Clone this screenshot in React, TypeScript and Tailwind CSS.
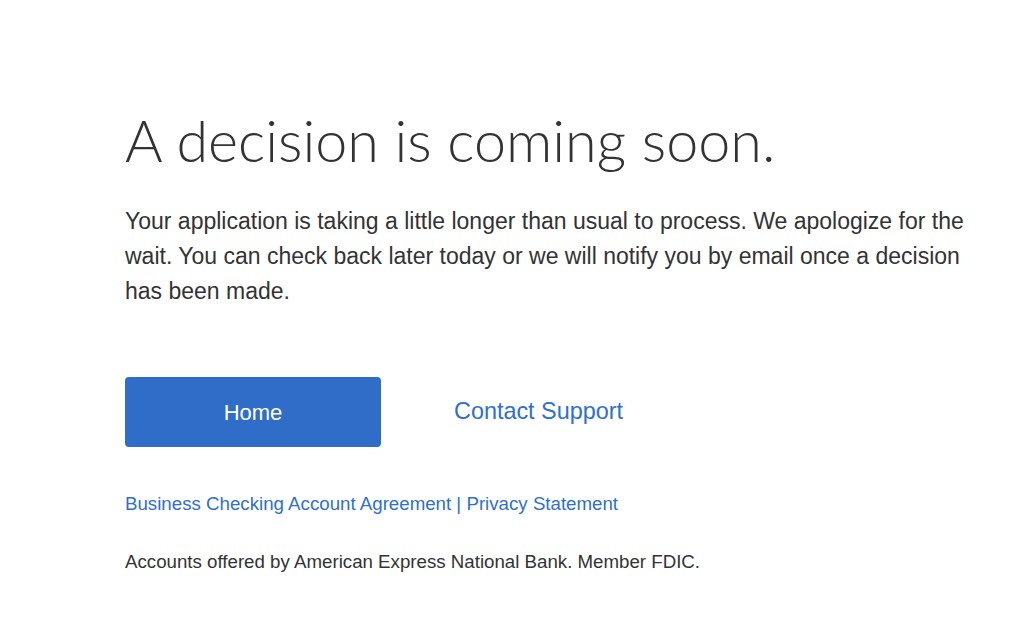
export default function App() {
  return (
    <div className="min-h-screen w-full bg-white" style={{ fontFamily: '"Liberation Sans", Arial, sans-serif' }}>
      <div className="pl-[125px] pt-[104px] pr-[20px]">
        <h1 className="text-[57.5px] leading-[72px] font-light text-[#333333]" style={{ fontFamily: 'Lato, "Liberation Sans", sans-serif' }}>
          A decision is coming soon.
        </h1>
        <p className="mt-[28px] max-w-[860px] text-[23px] leading-[35px] text-[#333333]">
          Your application is taking a little longer than usual to process. We apologize for the wait. You can check back later today or we will notify you by email once a decision has been made.
        </p>
        <div className="mt-[68px] flex items-center">
          <button className="flex h-[70px] w-[256px] items-center justify-center rounded-[4px] bg-[#2f6dc8] text-[22px] text-white">
            Home
          </button>
          <a className="ml-[73px] text-[23.4px] text-[#2f6fcd]">Contact Support</a>
        </div>
        <div className="mt-[45px] text-[18.7px] leading-[24px] text-[#2f6fcd]">
          Business Checking Account Agreement | Privacy Statement
        </div>
        <div className="mt-[34px] text-[18.7px] leading-[24px] text-[#333333]">
          Accounts offered by American Express National Bank. Member FDIC.
        </div>
      </div>
    </div>
  );
}
